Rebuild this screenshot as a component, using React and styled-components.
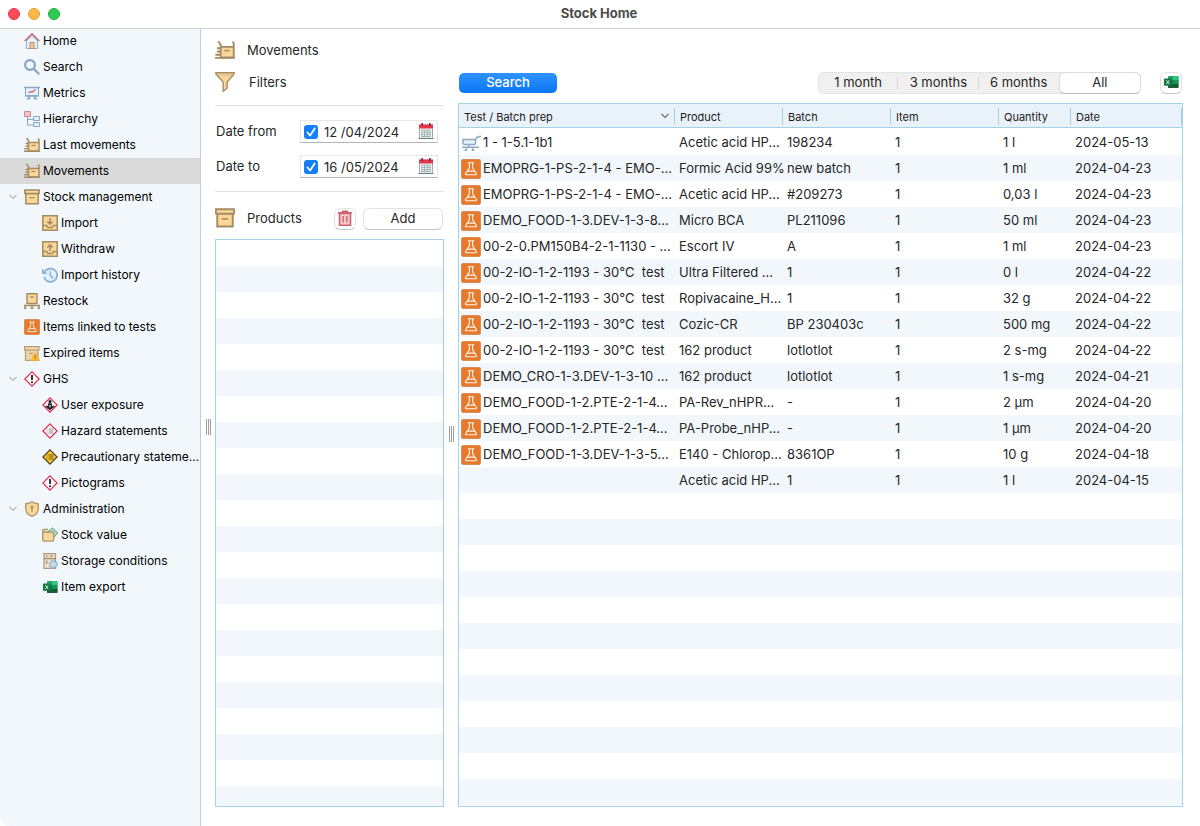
import React, { useState } from "react";
import styled, { createGlobalStyle } from "styled-components";

const GlobalStyle = createGlobalStyle`
  *, *::before, *::after {
    box-sizing: border-box;
  }
  body {
    margin: 0;
    background: #fff;
    font-family: Inter, "Liberation Sans", sans-serif;
    font-size: 13px;
    color: #262626;
  }
  button, input {
    font-family: inherit;
    font-size: inherit;
    color: inherit;
  }
`;

/* ---------- icons ---------- */

const Svg = ({ size = 16, children }) => (
  <svg width={size} height={size} viewBox="0 0 16 16" fill="none" aria-hidden="true">
    {children}
  </svg>
);

const HomeIcon = () => (
  <Svg>
    <path d="M2.5 8v7.5h11V8L8 2.5z" fill="#e3f3fc" stroke="#8fb0c8" />
    <path d="M6 15.5V9.500h4v6z" fill="#f6c9a2" stroke="#c9875c" />
    <path d="M.7 8 8 1l7.3 7" stroke="#c9646f" strokeWidth="1.5" />
  </Svg>
);

const SearchIcon = () => (
  <Svg>
    <circle cx="6" cy="6" r="4.9" fill="#eef6fc" stroke="#86a2c3" strokeWidth="2.1" />
    <path d="m9.8 9.8 5.4 5.4" stroke="#86a2c3" strokeWidth="2.2" />
  </Svg>
);

const MetricsIcon = () => (
  <Svg>
    <path d="M1.500 2.500h13v8.200h-13z" fill="#dff2fd" stroke="#8aa8c8" />
    <path d="M0 2.500h16M1 11h14M5.500 11 4 14.500M10.500 11l1.500 3.500M3 13.500h3.500M9.500 13.500H13" stroke="#8aa8c8" strokeWidth="1.300" />
    <path d="m4.500 8 2-1.500 1.500.8 3.500-2.800" stroke="#d0606a" strokeWidth="1.100" />
  </Svg>
);

const HierarchyIcon = () => (
  <Svg>
    <path d="M3.500 6v8H9M3.500 8.500H9" stroke="#8aa8c8" strokeWidth="1.100" />
    <path d="M.5.5h6v5h-6z" fill="#fbc4c8" stroke="#c98a92" />
    <path d="M9.500 5.500h6v4h-6zM9.500 11.500h6v4h-6z" fill="#ddf3fd" stroke="#8aa8c8" />
  </Svg>
);

const MovementsIcon = ({ size }) => (
  <Svg size={size}>
    <path d="M4.500 5.500h10v8h-10z" fill="#fbd69a" />
    <path d="M2.500 1 4.500 3.500v10.500h10.500V2.500L13.800 1.500M4.500 5.500H15" stroke="#a38c62" strokeWidth="1.500" />
    <path d="M7.500 8.500h4" stroke="#a38c62" strokeWidth="1.300" />
    <path d="M1.500 6.500H4M1.500 9.200H4M.3 11.800H4M0 14.300h15.700" stroke="#a38c62" strokeWidth="1.500" />
  </Svg>
);

const BoxIcon = ({ size }) => (
  <Svg size={size}>
    <path d="M1.800 4.500h12.400v10.300H1.800z" fill="#fbd69a" stroke="#a38c62" strokeWidth="1.500" />
    <path d="M.8 1h14.400v3.500H.8z" fill="#fbd69a" stroke="#a38c62" strokeWidth="1.500" />
    <path d="M5.500 8.700h5" stroke="#a38c62" strokeWidth="1.300" />
  </Svg>
);

const TrayIcon = ({ up }) => (
  <Svg>
    <path d="M.8.8h14.400v14.400H.8z" fill="#fbd69a" stroke="#a38c62" strokeWidth="1.500" />
    <path d="M1 10.500h3.700l1 2h4.600l1-2H15" stroke="#a38c62" strokeWidth="1.300" />
    {up ? (
      <path d="M8 10V4M5.300 6.500 8 3.800l2.700 2.700" stroke="#a38c62" strokeWidth="1.600" />
    ) : (
      <path d="M8 3v6M5.300 6.500 8 9.200l2.700-2.700" stroke="#a38c62" strokeWidth="1.600" />
    )}
  </Svg>
);

const HistoryIcon = () => (
  <Svg>
    <circle cx="8.500" cy="8" r="6.500" fill="#dff2fd" />
    <path d="M3 4.300A6.700 6.700 0 1 1 2 10" stroke="#8eb0d6" strokeWidth="1.800" />
    <path d="M0 1.500V7h5.500z" fill="#8eb0d6" />
    <path d="M8.300 4.300V8.500l3 3" stroke="#8eb0d6" strokeWidth="1.600" />
  </Svg>
);

const RestockIcon = () => (
  <Svg>
    <path d="M3 .8h10v9.700H3z" fill="#fbd69a" stroke="#a38c62" strokeWidth="1.400" />
    <path d="M6 4h4" stroke="#a38c62" strokeWidth="1.300" />
    <path d="M0 12.500h16M1 12.500V16M8 12.500V16M15 12.500V16M0 15.500h2.500M6.500 15.500h3M13.500 15.500H16" stroke="#a38c62" strokeWidth="1.500" />
  </Svg>
);

const FlaskIcon = ({ size }) => (
  <Svg size={size}>
    <rect x=".2" y=".2" width="15.600" height="15.600" rx="1.800" fill="#e67a2c" stroke="#bb7a4a" strokeWidth=".4" />
    <path d="M5.500 3h5M6.700 3v4L3.700 11.600c-.3.500 0 1 .5 1h7.600c.5 0 .8-.5.500-1L9.300 7V3M5.200 9.700h5.600" stroke="#fff4ea" strokeWidth=".9" />
  </Svg>
);

const ExpiredIcon = () => (
  <Svg>
    <path d="M1.500 5h12.500v10.300H1.500z" fill="#ecd5aa" stroke="#b39c78" strokeWidth="1.200" />
    <path d="M.6 1.600h14.400V5H.6z" fill="#f5d9a6" stroke="#b39c78" strokeWidth="1.200" />
    <path d="M5 8.500h4" stroke="#b39c78" strokeWidth="1.200" />
    <path d="m11.200 7.500 4.500 8H6.700z" fill="#fcbf2e" stroke="#f0a830" strokeWidth=".6" />
    <path d="M11.200 10v3M11.200 13.700v1" stroke="#a86a1a" strokeWidth="1" />
  </Svg>
);

const Diamond = ({ fill = "#fff", stroke = "#e2264a", children }) => (
  <Svg>
    <path d="m8 .9 7.100 7.100L8 15.100.9 8z" fill={fill} stroke={stroke} strokeWidth="1.200" />
    {children}
  </Svg>
);

const WarningIcon = () => (
  <Diamond>
    <path d="M8 4v5" stroke="#111" strokeWidth="1.700" />
    <circle cx="8" cy="11.200" r="1" fill="#111" />
  </Diamond>
);

const ExposureIcon = () => (
  <Diamond>
    <circle cx="8" cy="4.400" r="1.500" fill="#111" />
    <path d="M6.200 6.200h3.600l.4 3 1.800-.7.800 1-4.800 3.800-4.800-3.800.8-1 1.800.7z" fill="#222" />
    <path d="m8 7.500.8 1.500L8 11 7.200 9z" fill="#fff" />
  </Diamond>
);

const ListLines = ({ color }) => (
  <path d="M4.500 6h1M6.500 6h5M4.500 8h1M6.500 8h5M4.500 10h1M6.500 10h5" stroke={color} strokeWidth="1.100" />
);

const HazardIcon = () => (
  <Diamond>
    <ListLines color="#8c8c8c" />
  </Diamond>
);

const PrecautionIcon = () => (
  <Diamond fill="#fdc82f" stroke="#4a4020">
    <ListLines color="#6b5418" />
  </Diamond>
);

const ShieldIcon = () => (
  <Svg>
    <path d="M8 .8c2 1.400 4 1.900 6.300 2v4.400c0 4-2.600 6.700-6.300 8.100-3.700-1.400-6.300-4.100-6.300-8.100V2.800c2.300-.1 4.300-.6 6.300-2z" fill="#fbd69a" stroke="#a9946f" strokeWidth="1.300" />
    <circle cx="8" cy="6" r="1.500" fill="#a38c62" />
    <path d="M8 6v4.500" stroke="#a38c62" strokeWidth="1.400" />
  </Svg>
);

const ValueIcon = () => (
  <Svg>
    <path d="m5.500 5 5-4 5 5-4.500 5z" fill="#b5dcc4" stroke="#86b79b" strokeWidth="1.300" />
    <path d="M1.500 5h8.500c1 0 1.700.7 1.700 1.700v5.800c0 1-.7 1.700-1.700 1.700H2.500c-1 0-1.800-.7-1.800-1.700V4c0-1 .8-1.700 1.800-1.700H6" fill="#fbd69a" stroke="#a9946f" strokeWidth="1.300" />
  </Svg>
);

const StorageIcon = () => (
  <Svg>
    <path d="M2 .7h11.500v14.600H2z" fill="#f3e3cf" stroke="#b09a82" strokeWidth="1.300" />
    <path d="M2 5.700h11.500M4.700 2.200v2M4.700 7.500V11M7.500 3.200h3.500" stroke="#a08a72" strokeWidth="1.300" />
    <circle cx="11.300" cy="11.300" r="4.100" stroke="#93b4d2" strokeWidth="1.300" strokeDasharray="1.600 1.620" />
    <circle cx="11.300" cy="11.300" r="3" fill="#e3f2fb" stroke="#93b4d2" strokeWidth="1.200" />
    <circle cx="11.300" cy="11.300" r="1" fill="#93b4d2" />
  </Svg>
);

const ExcelIcon = () => (
  <Svg>
    <rect x="5" y="2" width="10.500" height="12" rx="1" fill="#21a366" />
    <path d="M10 2h4.500c.6 0 1 .4 1 1v3H10z" fill="#33c481" />
    <path d="M5 6h5v4H5z" fill="#107c41" />
    <path d="M10 10h5.500v3c0 .6-.4 1-1 1H6c-.6 0-1-.4-1-1v-3z" fill="#185c37" />
    <path d="M10 6h5.500v4H10z" fill="#1b9358" />
    <rect x="1" y="4.500" width="7.500" height="7.200" rx=".7" fill="#117a42" />
    <path d="m3.400 6.300 2.700 3.700M6.100 6.300 3.400 10" stroke="#d8efe2" strokeWidth="1" />
  </Svg>
);

const FunnelIcon = () => (
  <Svg size={20}>
    <path d="M.7.6h14.600v1L9.700 8v5l-3.200 2.400V8L.7 1.600z" fill="#fbd69a" stroke="#a38c62" strokeWidth="1.100" />
    <path d="M2 2.500h12" stroke="#c9ab74" strokeWidth=".6" />
  </Svg>
);

const CalendarIcon = () => (
  <Svg>
    <path d="M1.500 2h13v13.300h-13z" fill="#f4f7f7" stroke="#8a9b9e" strokeWidth=".8" />
    <path d="M1 1.500h14v4H1z" fill="#e2364d" />
    <path d="M4.200 0v3M11.800 0v3" stroke="#8a2030" strokeWidth="1.500" />
    <path d="M3.500 7h9M3.500 9.300h9M3.500 11.600h9M3.500 13.500h9M3.800 7v6.500M6.600 7v6.500M9.400 7v6.500M12.200 7v6.500" stroke="#90a4a6" strokeWidth=".8" />
    <path d="M.5 15.500h15" stroke="#6d7f83" />
  </Svg>
);

const TrashIcon = () => (
  <Svg>
    <path d="M2.500 3.500h11v11.700h-11z" fill="#fbc9cd" stroke="#c9646f" strokeWidth="1.600" />
    <path d="M.8 2.800h14.400M5 1.200h6" stroke="#c9646f" strokeWidth="1.600" />
    <path d="M6.200 6v6.500M9.800 6v6.500" stroke="#c9646f" strokeWidth="1.400" />
  </Svg>
);

const PrepIcon = () => (
  <svg width="20" height="20" viewBox="0 0 20 20" fill="none" aria-hidden="true">
    <path d="M2 6.500h12.500v3.800c0 .7-.5 1.200-1.200 1.200H3.700c-1 0-1.700-.7-1.700-1.600z" fill="#e1f2fc" stroke="#90a9c4" strokeWidth="1.500" />
    <path d="M14 7.500 16 4.200l4-1" stroke="#90a9c4" strokeWidth="1.500" />
    <path d="M1 14.300h17M5.500 14.500v2.700H3.500M11.500 14.500v2.700h2M8 12v2" stroke="#90a9c4" strokeWidth="1.500" />
  </svg>
);

const ChevronIcon = () => (
  <svg width="10" height="6" viewBox="0 0 10 6" fill="none" aria-hidden="true">
    <path d="m1.500 1 3.500 3.500L8.500 1" stroke="currentColor" strokeWidth="1.200" />
  </svg>
);

/* ---------- window ---------- */

const Window = styled.div`
  min-height: 100vh;
  display: flex;
  flex-direction: column;
`;

const TitleBar = styled.header`
  display: grid;
  grid-template-columns: 1fr auto 1fr;
  align-items: center;
  height: 28px;
  padding: 0 10px 0 8px;
  box-shadow: 0 1px 0 #d2d2d2;
  z-index: 1;
`;

const Lights = styled.div`
  display: flex;
  gap: 8px;
`;

const Light = styled.button`
  width: 12px;
  height: 12px;
  padding: 0;
  border-radius: 50%;
  border: 1px solid ${(props) => props.$edge};
  background: ${(props) => props.$color};
`;

const WindowTitle = styled.h1`
  margin: 0;
  padding-bottom: 2px;
  font-size: 13px;
  line-height: 26px;
  font-weight: 700;
  color: #4b4b4b;
`;

const Workspace = styled.div`
  flex: 1;
  display: flex;
`;

/* ---------- sidebar ---------- */

const Sidebar = styled.nav`
  width: 201px;
  flex-shrink: 0;
  background: #f2f7fc;
  border-right: 1px solid #cbcbcb;
  border-bottom-left-radius: 10px;
`;

const NavList = styled.ul`
  list-style: none;
  margin: 0;
  padding: 0;
`;

const NavLink = styled.a`
  display: flex;
  align-items: center;
  height: 26px;
  padding-left: ${(props) => (props.$child ? "42px" : "8px")};
  background: ${(props) => (props.$active ? "#dadada" : "transparent")};
  color: #000;
  font-size: 12px;
  text-decoration: none;
  white-space: nowrap;

  svg {
    flex-shrink: 0;
  }
`;

const Twisty = styled.span`
  display: flex;
  width: 16px;
  color: #b4b8bc;
`;

const NavText = styled.span`
  margin-left: 3px;
  padding-bottom: 2px;
`;

/* ---------- filters ---------- */

const Content = styled.main`
  flex: 1;
  min-width: 0;
  display: flex;
  padding-right: 17px;
`;

const Splitter = styled.div`
  width: 14px;
  flex-shrink: 0;
  display: flex;
  align-items: center;
  justify-content: center;

  &::before {
    content: "";
    width: 5px;
    height: 16px;
    background: repeating-linear-gradient(90deg, #9c9c9c 0 1px, #fff 1px 2px);
  }
`;

const Page = styled.div`
  flex: 1;
  min-width: 0;
  display: flex;
  flex-direction: column;
  padding: 11px 0 19px;
`;

const PageHeader = styled.div`
  display: flex;
  align-items: center;
  gap: 12px;
  height: 22px;
`;

const Heading = styled.h2`
  margin: 0;
  font-size: 13px;
  font-weight: 400;
`;

const Columns = styled.div`
  flex: 1;
  display: flex;
`;

const FilterPanel = styled.section`
  width: 229px;
  flex-shrink: 0;
  display: flex;
  flex-direction: column;
`;

const FilterTitle = styled.div`
  display: flex;
  align-items: center;
  gap: 14px;
  height: 22px;
  margin-top: 10px;
`;

const Dates = styled.div`
  display: flex;
  flex-direction: column;
  gap: 12px;
  margin: 12px 0 16px;
  padding: 14px 6px 13px 1px;
  border: solid #e2e2e2;
  border-width: 1px 0;
`;

const DateRow = styled.div`
  display: flex;
  align-items: center;
  justify-content: space-between;
`;

const DateLabel = styled.label`
  padding-bottom: 2px;
`;

const DateBox = styled.div`
  display: flex;
  align-items: center;
  width: 138px;
  height: 23px;
  padding: 0 3px;
  border: 1px solid #e6e6e6;
  border-bottom-color: #b4b4b4;
`;

const CheckWrap = styled.span`
  display: grid;
  width: 14px;
  height: 14px;

  > * {
    grid-area: 1 / 1;
  }
  svg {
    pointer-events: none;
  }
`;

const CheckInput = styled.input`
  appearance: none;
  width: 14px;
  height: 14px;
  margin: 0;
  border-radius: 3px;
  border: 1px solid #c4c4c4;
  background: #fff;

  &:checked {
    border: none;
    background: #147efb;
  }
`;

const DateInput = styled.input`
  flex: 1;
  min-width: 0;
  height: 20px;
  padding: 0 0 0 6px;
  border: none;
  outline: none;
  background: transparent;
`;

const IconButton = styled.button`
  display: flex;
  padding: 0 0 2px;
  border: none;
  background: transparent;
`;

const ProductsBar = styled.div`
  display: flex;
  align-items: center;
  gap: 7px;
  height: 22px;
  margin-bottom: 9px;
  padding-right: 1px;
`;

const ProductsTitle = styled.div`
  flex: 1;
  display: flex;
  align-items: center;
  gap: 12px;
  padding-bottom: 2px;
`;

const PushButton = styled.button`
  display: flex;
  align-items: center;
  justify-content: center;
  width: ${(props) => props.$width};
  height: 22px;
  padding: 0 0 2px;
  border: 1px solid #e3e3e3;
  border-bottom-color: #c6c6c6;
  border-radius: 6px;
  background: #fff;
`;

const stripes = `repeating-linear-gradient(#fff 0 26px, #f2f7fc 26px 52px)`;

const ProductList = styled.div`
  flex: 1;
  border: 1px solid #a2d2e8;
  background: ${stripes};
`;

/* ---------- results ---------- */

const Results = styled.section`
  flex: 1;
  min-width: 0;
  display: flex;
  flex-direction: column;
`;

const Toolbar = styled.div`
  display: flex;
  align-items: center;
  height: 22px;
  margin: 11px 1px 9px;
`;

const SearchButton = styled.button`
  width: 98px;
  height: 20px;
  padding: 0 0 2px;
  border: none;
  border-radius: 5px;
  background: linear-gradient(#2f93ff, #0a76f5);
  color: #fff;
  font-weight: 500;
`;

const Segments = styled.fieldset`
  display: flex;
  width: 323px;
  height: 22px;
  margin: 0 19px 0 auto;
  padding: 0;
  border: none;
  border-radius: 6px;
  background: #f0f0f0;
  box-shadow: inset 0 0 0 1px #e4e4e4;
`;

const Segment = styled.label`
  flex: 1;
  position: relative;
  display: flex;
  align-items: center;
  justify-content: center;
  padding-bottom: 2px;
  border-radius: 6px;

  & + &::before {
    content: "";
    position: absolute;
    left: -1px;
    top: 5px;
    bottom: 5px;
    width: 1px;
    background: #d9d9d9;
  }
  &:has(input:checked) {
    background: #fff;
    border: 1px solid #dcdcdc;
    border-bottom-color: #bcbcbc;
  }
  &:has(input:checked)::before {
    display: none;
  }
`;

const SegmentInput = styled.input`
  position: absolute;
  inset: 0;
  width: 100%;
  height: 100%;
  margin: 0;
  opacity: 0;
`;

const TableFrame = styled.div`
  flex: 1;
  border: 1px solid #a2d2e8;
  background: ${stripes};
  background-position: 0 25px;
  background-clip: content-box;
  background-origin: content-box;
`;

const Table = styled.table`
  width: 100%;
  table-layout: fixed;
  border-collapse: separate;
  border-spacing: 0;
`;

const HeadCell = styled.th`
  width: ${(props) => props.$width || "auto"};
  height: 25px;
  padding: 0;
  background: linear-gradient(#e9f1f9 23px, #a2d2e8 23px, #a2d2e8 24px, #fff 24px);
  font-size: 11px;
  font-weight: 400;
  text-align: left;
  vertical-align: top;
`;

const HeadInner = styled.div`
  display: flex;
  align-items: center;
  justify-content: space-between;
  height: 17px;
  margin: 4px 0 2px;
  padding: 1px 4px 0 5px;
  border-right: 1px solid #a2d2e8;
  color: #1c1c1c;

  svg {
    color: #707478;
    margin-bottom: 3px;
  }
`;

const Cell = styled.td`
  height: 26px;
  padding: 0 0 0 ${(props) => (props.$first ? "2px" : "4px")};
  line-height: 26px;
  white-space: pre;
`;

const TestName = styled.span`
  display: flex;
  align-items: center;
  gap: 2px;

  svg {
    flex-shrink: 0;
    margin-top: 2px;
  }
`;

/* ---------- data ---------- */

const navItems = [
  { label: "Home", icon: <HomeIcon /> },
  { label: "Search", icon: <SearchIcon /> },
  { label: "Metrics", icon: <MetricsIcon /> },
  { label: "Hierarchy", icon: <HierarchyIcon /> },
  { label: "Last movements", icon: <MovementsIcon /> },
  { label: "Movements", icon: <MovementsIcon />, active: true },
  {
    label: "Stock management",
    icon: <BoxIcon />,
    children: [
      { label: "Import", icon: <TrayIcon /> },
      { label: "Withdraw", icon: <TrayIcon up /> },
      { label: "Import history", icon: <HistoryIcon /> },
    ],
  },
  { label: "Restock", icon: <RestockIcon /> },
  { label: "Items linked to tests", icon: <FlaskIcon /> },
  { label: "Expired items", icon: <ExpiredIcon /> },
  {
    label: "GHS",
    icon: <WarningIcon />,
    children: [
      { label: "User exposure", icon: <ExposureIcon /> },
      { label: "Hazard statements", icon: <HazardIcon /> },
      { label: "Precautionary stateme...", icon: <PrecautionIcon /> },
      { label: "Pictograms", icon: <WarningIcon /> },
    ],
  },
  {
    label: "Administration",
    icon: <ShieldIcon />,
    children: [
      { label: "Stock value", icon: <ValueIcon /> },
      { label: "Storage conditions", icon: <StorageIcon /> },
      { label: "Item export", icon: <ExcelIcon /> },
    ],
  },
];

const columns = [
  { label: "Test / Batch prep", width: "216px", sorted: true },
  { label: "Product", width: "108px" },
  { label: "Batch", width: "108px" },
  { label: "Item", width: "108px" },
  { label: "Quantity", width: "72px" },
  { label: "Date" },
];

const movements = [
  ["1 - 1-5.1-1b1", "Acetic acid HP...", "198234", "1", "1 l", "2024-05-13", "prep"],
  ["EMOPRG-1-PS-2-1-4 - EMO-...", "Formic Acid 99%", "new batch", "1", "1 ml", "2024-04-23", "test"],
  ["EMOPRG-1-PS-2-1-4 - EMO-...", "Acetic acid HP...", "#209273", "1", "0,03 l", "2024-04-23", "test"],
  ["DEMO_FOOD-1-3.DEV-1-3-8...", "Micro BCA", "PL211096", "1", "50 ml", "2024-04-23", "test"],
  ["00-2-0.PM150B4-2-1-1130 - ...", "Escort IV", "A", "1", "1 ml", "2024-04-23", "test"],
  ["00-2-IO-1-2-1193 - 30°C  test", "Ultra Filtered ...", "1", "1", "0 l", "2024-04-22", "test"],
  ["00-2-IO-1-2-1193 - 30°C  test", "Ropivacaine_H...", "1", "1", "32 g", "2024-04-22", "test"],
  ["00-2-IO-1-2-1193 - 30°C  test", "Cozic-CR", "BP 230403c", "1", "500 mg", "2024-04-22", "test"],
  ["00-2-IO-1-2-1193 - 30°C  test", "162 product", "lotlotlot", "1", "2 s-mg", "2024-04-22", "test"],
  ["DEMO_CRO-1-3.DEV-1-3-10 ...", "162 product", "lotlotlot", "1", "1 s-mg", "2024-04-21", "test"],
  ["DEMO_FOOD-1-2.PTE-2-1-4...", "PA-Rev_nHPR...", "-", "1", "2 µm", "2024-04-20", "test"],
  ["DEMO_FOOD-1-2.PTE-2-1-4...", "PA-Probe_nHP...", "-", "1", "1 µm", "2024-04-20", "test"],
  ["DEMO_FOOD-1-3.DEV-1-3-5...", "E140 - Chlorop...", "8361OP", "1", "10 g", "2024-04-18", "test"],
  ["", "Acetic acid HP...", "1", "1", "1 l", "2024-04-15", ""],
];

const periods = ["1 month", "3 months", "6 months", "All"];

const NavItem = ({ item, child }) => (
  <li>
    <NavLink href="#" $child={child} $active={item.active}>
      {!child && <Twisty>{item.children && <ChevronIcon />}</Twisty>}
      {item.icon}
      <NavText>{item.label}</NavText>
    </NavLink>
    {item.children && (
      <NavList>
        {item.children.map((sub) => (
          <NavItem key={sub.label} item={sub} child />
        ))}
      </NavList>
    )}
  </li>
);

const DateField = ({ id, label, initial }) => {
  const [enabled, setEnabled] = useState(true);
  const [value, setValue] = useState(initial);

  return (
    <DateRow>
      <DateLabel htmlFor={id}>{label}</DateLabel>
      <DateBox>
        <CheckWrap>
          <CheckInput
            type="checkbox"
            aria-label={`Use ${label.toLowerCase()}`}
            checked={enabled}
            onChange={(e) => setEnabled(e.target.checked)}
          />
          {enabled && (
            <svg width="14" height="14" viewBox="0 0 14 14" fill="none">
              <path d="m3.500 7.500 2.600 3L10.700 3.500" stroke="#fff" strokeWidth="1.800" strokeLinecap="round" strokeLinejoin="round" />
            </svg>
          )}
        </CheckWrap>
        <DateInput id={id} type="text" value={value} onChange={(e) => setValue(e.target.value)} />
        <IconButton aria-label="Open calendar">
          <CalendarIcon />
        </IconButton>
      </DateBox>
    </DateRow>
  );
};

const App = () => {
  const [period, setPeriod] = useState("All");

  return (
    <>
      <GlobalStyle />
      <Window>
        <TitleBar>
          <Lights>
            <Light aria-label="Close" $color="#fe4b5a" $edge="#e2364a" />
            <Light aria-label="Minimize" $color="#fdb748" $edge="#dd9f3b" />
            <Light aria-label="Zoom" $color="#2dca51" $edge="#21ae41" />
          </Lights>
          <WindowTitle>Stock Home</WindowTitle>
        </TitleBar>
        <Workspace>
          <Sidebar>
            <NavList>
              {navItems.map((item) => (
                <NavItem key={item.label} item={item} />
              ))}
            </NavList>
          </Sidebar>
          <Content>
            <Splitter />
            <Page>
              <PageHeader>
                <MovementsIcon size={20} />
                <Heading>Movements</Heading>
              </PageHeader>
              <Columns>
                <FilterPanel>
                  <FilterTitle>
                    <FunnelIcon />
                    <Heading>Filters</Heading>
                  </FilterTitle>
                  <Dates>
                    <DateField id="date-from" label="Date from" initial="12 /04/2024" />
                    <DateField id="date-to" label="Date to" initial="16 /05/2024" />
                  </Dates>
                  <ProductsBar>
                    <ProductsTitle>
                      <BoxIcon size={20} />
                      <Heading>Products</Heading>
                    </ProductsTitle>
                    <PushButton $width="22px" aria-label="Remove product">
                      <TrashIcon />
                    </PushButton>
                    <PushButton $width="80px">Add</PushButton>
                  </ProductsBar>
                  <ProductList />
                </FilterPanel>
                <Splitter />
                <Results>
                  <Toolbar>
                    <SearchButton>Search</SearchButton>
                    <Segments aria-label="Period">
                      {periods.map((name) => (
                        <Segment key={name}>
                          <SegmentInput
                            type="radio"
                            name="period"
                            checked={period === name}
                            onChange={() => setPeriod(name)}
                          />
                          {name}
                        </Segment>
                      ))}
                    </Segments>
                    <PushButton $width="22px" aria-label="Export to Excel">
                      <ExcelIcon />
                    </PushButton>
                  </Toolbar>
                  <TableFrame>
                    <Table>
                      <thead>
                        <tr>
                          {columns.map((column) => (
                            <HeadCell key={column.label} $width={column.width}>
                              <HeadInner>
                                {column.label}
                                {column.sorted && <ChevronIcon />}
                              </HeadInner>
                            </HeadCell>
                          ))}
                        </tr>
                      </thead>
                      <tbody>
                        {movements.map(([test, product, batch, item, quantity, date, kind], index) => (
                          <tr key={index}>
                            <Cell $first>
                              <TestName>
                                {kind === "prep" && <PrepIcon />}
                                {kind === "test" && <FlaskIcon size={20} />}
                                {test}
                              </TestName>
                            </Cell>
                            <Cell>{product}</Cell>
                            <Cell>{batch}</Cell>
                            <Cell>{item}</Cell>
                            <Cell>{quantity}</Cell>
                            <Cell>{date}</Cell>
                          </tr>
                        ))}
                      </tbody>
                    </Table>
                  </TableFrame>
                </Results>
              </Columns>
            </Page>
          </Content>
        </Workspace>
      </Window>
    </>
  );
};

export default App;
